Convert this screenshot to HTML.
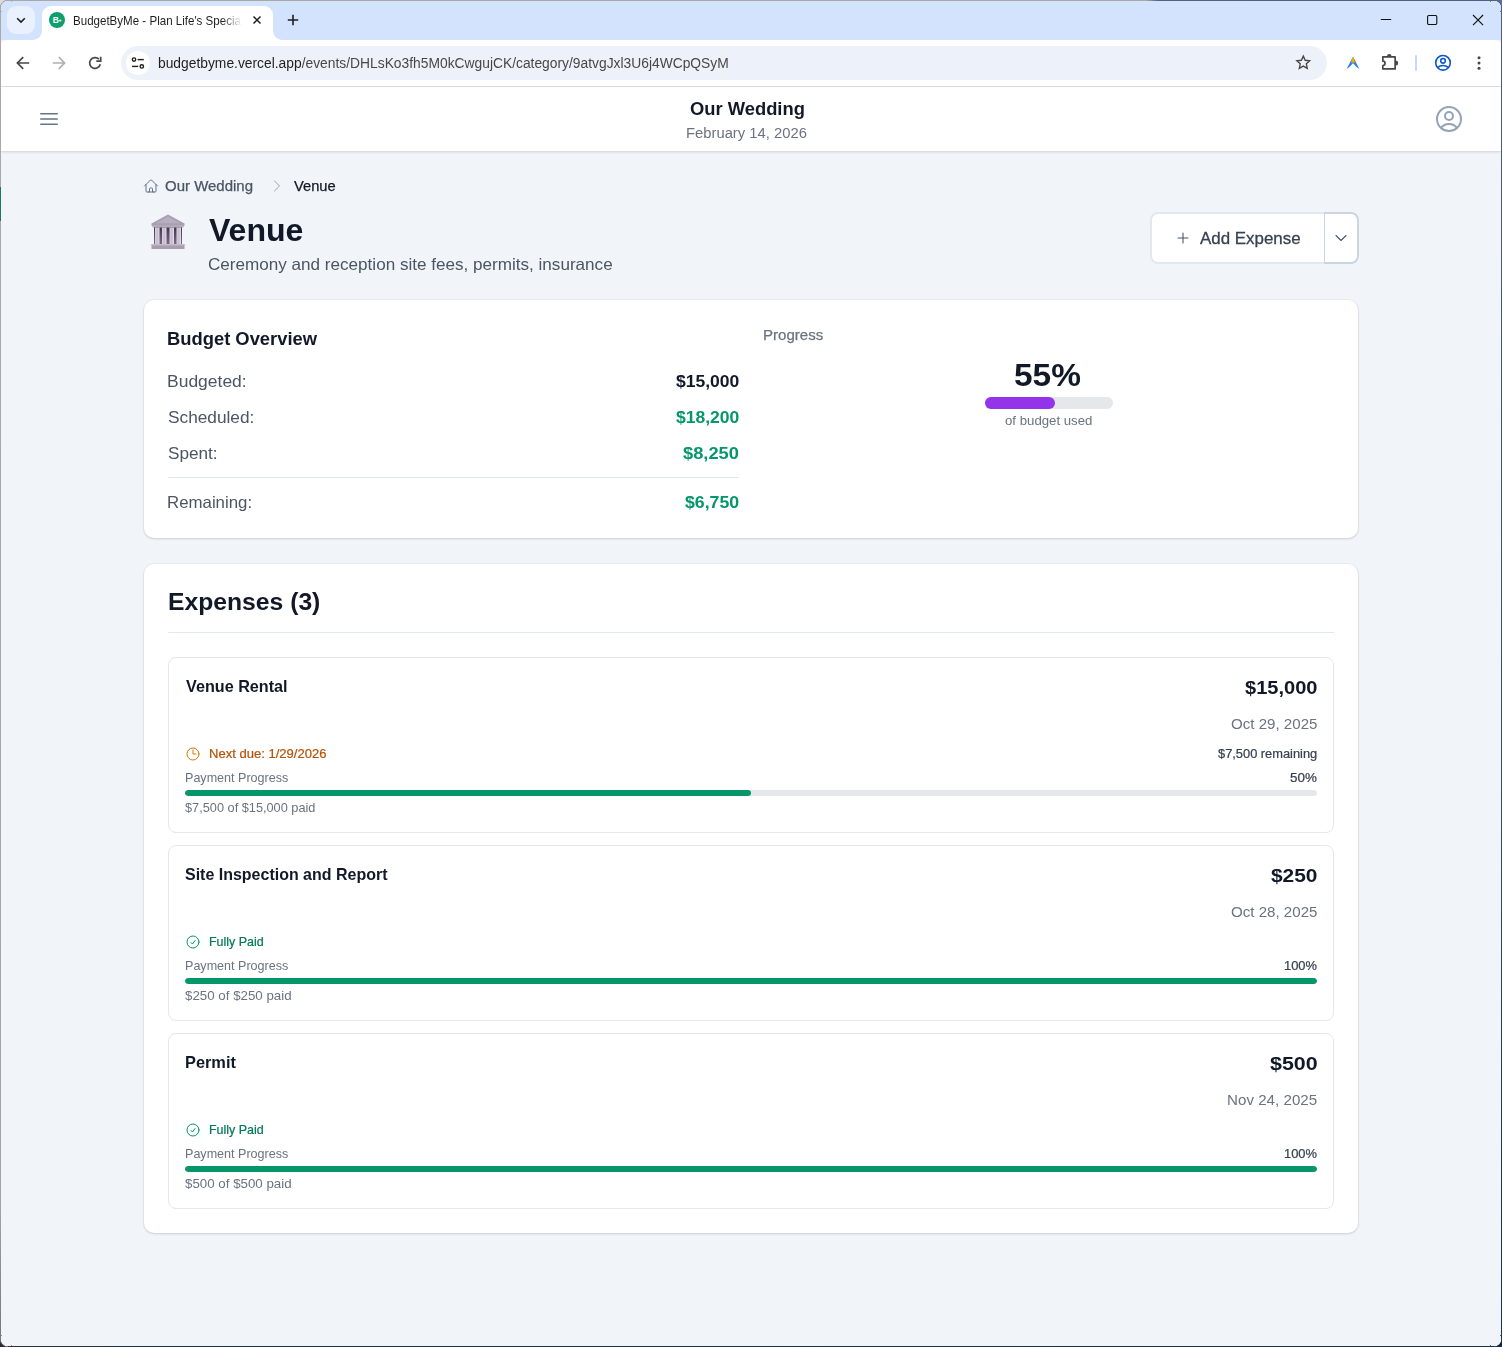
<!DOCTYPE html>
<html lang="en">
<head>
<meta charset="utf-8">
<title>BudgetByMe - Plan Life's Special Events</title>
<style>
*{box-sizing:border-box;margin:0;padding:0}
html,body{width:1502px;height:1347px;overflow:hidden;background:#f1f5f9;font-family:"Liberation Sans",sans-serif;}
#win{position:absolute;left:0;top:0;width:1502px;height:1347px;background:#f1f5f9;overflow:hidden;}
#frame{position:absolute;left:0;top:0;width:1502px;height:1347px;pointer-events:none;z-index:50}
#frame i{position:absolute;display:block}
.abs{position:absolute}
/* chrome */
#tabstrip{position:absolute;left:0;top:0;width:1502px;height:40px;background:#d3e3fd}
#tabsearch{position:absolute;left:7px;top:6px;width:28px;height:28px;border-radius:9px;background:#e9f1fe}
#tab{position:absolute;left:42px;top:6px;width:231px;height:34px;background:#fff;border-radius:9px 9px 0 0}
#tab:before,#tab:after{content:"";position:absolute;bottom:0;width:9px;height:9px;background:radial-gradient(circle at 0 0,rgba(255,255,255,0) 8.5px,#fff 9px)}
#tab:before{left:-9px}
#tab:after{right:-9px;background:radial-gradient(circle at 100% 0,rgba(255,255,255,0) 8.5px,#fff 9px)}
#tabtitle{position:absolute;left:31px;top:7px;width:170px;height:16px;font-size:12px;line-height:16px;color:#1f1f1f;white-space:nowrap;overflow:hidden;letter-spacing:0.1px;-webkit-mask-image:linear-gradient(90deg,#000 148px,transparent 168px);mask-image:linear-gradient(90deg,#000 148px,transparent 168px)}
#toolbar{position:absolute;left:0;top:40px;width:1502px;height:47px;background:#fff;border-bottom:1px solid #dcdfe3;border-radius:8px 8px 0 0}
#omni{position:absolute;left:121px;top:6px;width:1206px;height:34px;border-radius:17px;background:#edf2fa}
#siteinfo{position:absolute;left:5px;top:5px;width:24px;height:24px;border-radius:12px;background:#fff}
#url{position:absolute;left:36px;top:8px;font-size:14px;line-height:18px;color:#1f1f1f;white-space:nowrap;letter-spacing:0.02px}
#url span{color:#474747}
/* page */
#page{position:absolute;left:1px;top:87px;width:1500px;height:1259px;background:#f1f5f9;color:#0f172a}
#hdr{position:absolute;left:0;top:0;width:1500px;height:64px;background:#fff;box-shadow:0 1px 3px rgba(15,23,42,.1),0 1px 2px rgba(15,23,42,.06)}
.t{position:absolute;white-space:nowrap;line-height:1;transform-origin:0 0}
.card{position:absolute;background:#fff;border-radius:10px;box-shadow:0 0 0 1px rgba(15,23,42,.03),0 1px 3px rgba(15,23,42,.09),0 1px 2px rgba(15,23,42,.05)}
.item{position:absolute;left:24px;width:1166px;height:176px;border:1px solid #e5e7eb;border-radius:8px;background:#fff}
.bar{position:absolute;left:16px;top:132px;width:1132px;height:6px;border-radius:3px;background:#e5e7eb;overflow:hidden}
.bar i{display:block;height:6px;border-radius:3px;background:#059669}
.g{color:#64748b}
.gr{color:#059669}
</style>
</head>
<body>
<div id="win">
 <div id="tabstrip">
  <div id="tabsearch"><svg class="abs" style="left:8px;top:9px" width="12" height="10" viewBox="0 0 12 10" fill="none" stroke="#1f1f1f" stroke-width="1.600"><path d="M2.200 3.200l3.800 3.800 3.800-3.800"/></svg></div>
  <div id="tab">
   <div class="abs" style="left:7px;top:6px;width:16px;height:16px;border-radius:8px;background:#0e9f6e;color:#fff;font-size:8.500px;font-weight:700;line-height:16px;text-align:center;letter-spacing:-.4px">B<span style="font-size:5.500px;vertical-align:1px">+</span></div>
      <svg class="abs" style="left:209px;top:8px" width="12" height="12" viewBox="0 0 12 12" fill="none" stroke="#1f1f1f" stroke-width="1.5"><path d="M2.500 2.500l7 7M9.500 2.500l-7 7"/></svg>
  </div>
  <svg class="abs" style="left:286px;top:13px" width="14" height="14" viewBox="0 0 14 14" fill="none" stroke="#1f1f1f" stroke-width="1.6"><path d="M7 1.800v10.400M1.800 7h10.400"/></svg>
  <!-- window controls -->
  <svg class="abs" style="left:1380px;top:13px" width="12" height="12" viewBox="0 0 12 12" fill="none" stroke="#111" stroke-width="1"><path d="M0.800 6.500h10.400"/></svg>
  <svg class="abs" style="left:1426px;top:14px" width="12" height="12" viewBox="0 0 12 12" fill="none" stroke="#111" stroke-width="1.100"><rect x="1.600" y="1.500" width="9.200" height="9" rx="1.200"/></svg>
  <svg class="abs" style="left:1472px;top:14px" width="12" height="12" viewBox="0 0 12 12" fill="none" stroke="#111" stroke-width="1.100"><path d="M1 1l10.100 10.100M11.100 1L1 11.100"/></svg>
 </div>
 <div id="toolbar">
  <svg class="abs" style="left:13px;top:13px" width="20" height="20" viewBox="0 0 20 20" fill="none" stroke="#474747" stroke-width="1.700"><path d="M16.200 10H4.800M10.200 4.200L4.400 10l5.800 5.800"/></svg>
  <svg class="abs" style="left:49px;top:13px" width="20" height="20" viewBox="0 0 20 20" fill="none" stroke="#b0b0b0" stroke-width="1.700"><path d="M3.800 10h11.400M9.800 4.200l5.800 5.800-5.800 5.800"/></svg>
  <svg class="abs" style="left:85px;top:13px" width="20" height="20" viewBox="0 0 20 20" fill="none" stroke="#474747" stroke-width="1.700"><path d="M15.300 11.300A5.400 5.400 0 1 1 13.900 6.200"/><path d="M15.700 3.800v4.400h-4.400"/></svg>
  <div id="omni"><div id="siteinfo"><svg class="abs" style="left:4px;top:4px" width="16" height="16" viewBox="0 0 16 16" fill="none" stroke="#1f1f1f" stroke-width="1.400"><circle cx="4" cy="4.600" r="1.700"/><path d="M7.600 4.600h6.200"/><circle cx="11.800" cy="11.400" r="1.700"/><path d="M2 11.400h6.200"/></svg></div>
   <svg class="abs" style="left:1173.600px;top:8.400px" width="16.600" height="16.600" viewBox="0 0 18 18" fill="none" stroke="#474747" stroke-width="1.500" stroke-linejoin="miter"><path d="M9 2.300l2.060 4.500 4.900.53-3.650 3.330 1 4.840L9 13.050 4.690 15.500l1-4.840L2.040 7.330l4.900-.53z"/></svg>
  </div>
  <!-- extension A icon -->
  <svg class="abs" style="left:1345px;top:15px" width="16" height="16" viewBox="0 0 16 16"><defs><linearGradient id="rb" x1="0" y1="0" x2="1" y2="0"><stop offset="0" stop-color="#34a853"/><stop offset=".5" stop-color="#fbbc05"/><stop offset="1" stop-color="#ea4335"/></linearGradient><clipPath id="ac"><path d="M8 1.800L14.400 14.100 11.500 11.900 8 8.200 4.500 11.900 1.600 14.100z"/></clipPath></defs><path d="M8 1.800L14.400 14.100 11.500 11.900 8 8.200 4.500 11.900 1.600 14.100z" fill="#2f7df6"/><rect x="5.200" y="0" width="5.600" height="7.600" fill="url(#rb)" clip-path="url(#ac)"/></svg>
  <!-- puzzle -->
  <svg class="abs" style="left:1379px;top:13px" width="20" height="20" viewBox="0 0 20 20"><path d="M3.850 3.850H16.150V15.950H3.850V12.500A2.200 2.200 0 0 0 3.850 8.100Z" fill="none" stroke="#474747" stroke-width="1.700" stroke-linejoin="round"/><path d="M8 3.200A2.250 2.200 0 0 1 12.500 3.200Z" fill="#474747"/><path d="M16.900 7.500A2.300 2.500 0 0 1 16.900 12.500Z" fill="#474747"/></svg>
  <div class="abs" style="left:1415px;top:15px;width:2px;height:16px;background:#c7d8f7;border-radius:1px"></div>
  <!-- profile -->
  <svg class="abs" style="left:1433px;top:13px" width="20" height="20" viewBox="0 0 20 20" fill="none" stroke="#0b57d0" stroke-width="1.600"><circle cx="10" cy="9.800" r="7.300"/><circle cx="10" cy="7.800" r="2.300"/><path d="M4.600 14.600c1.500-1.400 3.300-2.100 5.400-2.100s3.900.7 5.400 2.100"/></svg>
  <svg class="abs" style="left:1469px;top:13px" width="20" height="20" viewBox="0 0 20 20" fill="#474747"><circle cx="10" cy="4.800" r="1.500"/><circle cx="10" cy="10" r="1.500"/><circle cx="10" cy="15.200" r="1.500"/></svg>
 </div>
 <div id="page">
  <div id="hdr">
   <svg class="abs" style="left:36px;top:20px" width="24" height="24" viewBox="0 0 24 24" fill="none" stroke="#64748b" stroke-width="1.5" stroke-linecap="round"><path d="M3.75 6.75h16.5M3.75 12h16.5M3.75 17.25h16.5"/></svg>
   <svg class="abs" style="left:1432px;top:16px" width="32" height="32" viewBox="0 0 24 24" fill="none" stroke="#94a3b8" stroke-width="1.5" stroke-linecap="round" stroke-linejoin="round"><path d="M17.982 18.725A7.488 7.488 0 0012 15.75a7.488 7.488 0 00-5.982 2.975m11.963 0a9 9 0 10-11.963 0m11.963 0A8.966 8.966 0 0112 21a8.966 8.966 0 01-5.982-2.275M15 9.75a3 3 0 11-6 0 3 3 0 016 0z"/></svg>
  </div>
  <!-- breadcrumb icons -->
  <svg class="abs" style="left:142px;top:91px" width="16" height="16" viewBox="0 0 24 24" fill="none" stroke="#64748b" stroke-width="1.5" stroke-linecap="round" stroke-linejoin="round"><path d="M2.25 12l8.954-8.955c.44-.439 1.152-.439 1.591 0L21.75 12M4.5 9.75v10.125c0 .621.504 1.125 1.125 1.125H9.75v-4.875c0-.621.504-1.125 1.125-1.125h2.25c.621 0 1.125.504 1.125 1.125V21h4.125c.621 0 1.125-.504 1.125-1.125V9.75M8.250 21h8.250"/></svg>
  <svg class="abs" style="left:268px;top:91px" width="16" height="16" viewBox="0 0 24 24" fill="none" stroke="#94a3b8" stroke-width="1.5" stroke-linecap="round" stroke-linejoin="round"><path d="M8.25 4.5l7.5 7.5-7.5 7.5"/></svg>
  <!-- venue emoji -->
  <svg class="abs" style="left:148px;top:126px" width="38" height="38" viewBox="0 0 38 38">
   <defs><linearGradient id="col" x1="0" x2="1"><stop offset="0" stop-color="#d9d3de"/><stop offset=".5" stop-color="#c3bccb"/><stop offset="1" stop-color="#e4dfe8"/></linearGradient>
   <linearGradient id="dk" x1="0" y1="0" x2="0" y2="1"><stop offset="0" stop-color="#3f3050"/><stop offset="1" stop-color="#7d6c8d"/></linearGradient></defs>
   <rect x="5" y="13" width="28" height="19" fill="url(#dk)"/>
   <path d="M19 1.5L35.5 10.5v2.5H2.500v-2.5z" fill="#a99fb2"/>
   <path d="M19 3.500L31 10.200H7z" fill="#b7aebf"/>
   <rect x="3.500" y="12" width="31" height="2.500" fill="#b3aabb"/>
   <rect x="6" y="14.500" width="4.500" height="17" fill="url(#col)"/>
   <rect x="13" y="14.500" width="4.500" height="17" fill="url(#col)"/>
   <rect x="20.500" y="14.500" width="4.500" height="17" fill="url(#col)"/>
   <rect x="27.500" y="14.500" width="4.500" height="17" fill="url(#col)"/>
   <rect x="2.500" y="31" width="33" height="5" fill="#a79dae"/>
   <rect x="2.500" y="31" width="33" height="1.500" fill="#c2bac9"/>
  </svg>
  <!-- add expense -->
  <div class="abs" style="left:1149px;top:125px;width:176px;height:52px;background:#fff;border:2px solid #e2e8f0;border-right:0;border-radius:8px 0 0 8px"></div>
  <div class="abs" style="left:1323px;top:125px;width:35px;height:52px;background:#fff;border:2px solid #cbd5e1;border-left-width:1px;border-radius:0 8px 8px 0"></div>
  <svg class="abs" style="left:1174px;top:143px" width="16" height="16" viewBox="0 0 24 24" fill="none" stroke="#475569" stroke-width="1.6" stroke-linecap="round"><path d="M12 4.500v15m7.500-7.500h-15"/></svg>
  <svg class="abs" style="left:1332px;top:143px" width="16" height="16" viewBox="0 0 24 24" fill="none" stroke="#475569" stroke-width="1.6" stroke-linecap="round" stroke-linejoin="round"><path d="M19.500 8.250l-7.500 7.500-7.500-7.500"/></svg>
  <!-- budget card -->
  <div class="card" style="left:143px;top:213px;width:1214px;height:238px">
   <div class="abs" style="left:24px;top:177px;width:571px;height:1px;background:#e2e8f0"></div>
   <div class="abs" style="left:841px;top:97px;width:128px;height:12px;border-radius:6px;background:#e5e7eb"><div style="width:70px;height:12px;border-radius:6px;background:#9333ea"></div></div>
  </div>
  <!-- expenses card -->
  <div class="card" style="left:143px;top:477px;width:1214px;height:669px">
   <div class="abs" style="left:24px;top:68px;width:1166px;height:1px;background:#e2e8f0"></div>
   <div class="item" style="top:93px"><div class="bar"><i style="width:566px"></i></div></div>
   <div class="item" style="top:281px"><div class="bar"><i style="width:1132px"></i></div></div>
   <div class="item" style="top:469px"><div class="bar"><i style="width:1132px"></i></div></div>
  </div>
  <!-- status icons -->
  <svg class="abs" style="left:184px;top:659px" width="16" height="16" viewBox="0 0 24 24" fill="none" stroke="#d97706" stroke-width="1.5" stroke-linecap="round" stroke-linejoin="round"><path d="M12 6v6h4.500m4.500 0a9 9 0 11-18 0 9 9 0 0118 0z"/></svg>
  <svg class="abs" style="left:184px;top:847px" width="16" height="16" viewBox="0 0 24 24" fill="none" stroke="#059669" stroke-width="1.5" stroke-linecap="round" stroke-linejoin="round"><path d="M9 12.750L11.250 15 15 9.750M21 12a9 9 0 11-18 0 9 9 0 0118 0z"/></svg>
  <svg class="abs" style="left:184px;top:1035px" width="16" height="16" viewBox="0 0 24 24" fill="none" stroke="#059669" stroke-width="1.5" stroke-linecap="round" stroke-linejoin="round"><path d="M9 12.750L11.250 15 15 9.750M21 12a9 9 0 11-18 0 9 9 0 0118 0z"/></svg>
<div class="t" style="left:688.69px;top:13.31px;font-size:18.54px;font-weight:700;color:#111827;transform:scaleX(0.9906);">Our Wedding</div>
<div class="t" style="left:685.21px;top:38.79px;font-size:14.42px;font-weight:400;color:#6b7280;transform:scaleX(1.0267);">February 14, 2026</div>
<div class="t" style="left:164.13px;top:91.79px;font-size:14.42px;font-weight:400;color:#4b5563;transform:scaleX(1.0400);-webkit-text-stroke:0.25px;">Our Wedding</div>
<div class="t" style="left:292.55px;top:91.79px;font-size:14.42px;font-weight:400;color:#111827;transform:scaleX(1.0182);-webkit-text-stroke:0.25px;">Venue</div>
<div class="t" style="left:207.81px;top:128.84px;font-size:30.90px;font-weight:700;color:#111827;transform:scaleX(1.0376);">Venue</div>
<div class="t" style="left:207.36px;top:169.05px;font-size:16.48px;font-weight:400;color:#4b5563;transform:scaleX(1.0377);">Ceremony and reception site fees, permits, insurance</div>
<div class="t" style="left:1199.28px;top:143.05px;font-size:16.48px;font-weight:400;color:#374151;transform:scaleX(1.0265);-webkit-text-stroke:0.29px;">Add Expense</div>
<div class="t" style="left:166.21px;top:243.31px;font-size:18.54px;font-weight:700;color:#111827;transform:scaleX(0.9913);">Budget Overview</div>
<div class="t" style="left:166.44px;top:286.05px;font-size:16.48px;font-weight:400;color:#4b5563;transform:scaleX(1.0614);">Budgeted:</div>
<div class="t" style="left:166.95px;top:322.05px;font-size:16.48px;font-weight:400;color:#4b5563;transform:scaleX(1.0480);">Scheduled:</div>
<div class="t" style="left:166.95px;top:358.05px;font-size:16.48px;font-weight:400;color:#4b5563;transform:scaleX(1.0419);">Spent:</div>
<div class="t" style="left:166.44px;top:407.05px;font-size:16.48px;font-weight:400;color:#4b5563;transform:scaleX(1.0216);">Remaining:</div>
<div class="t" style="left:674.76px;top:286.05px;font-size:16.48px;font-weight:700;color:#111827;transform:scaleX(1.0633);">$15,000</div>
<div class="t" style="left:674.73px;top:322.05px;font-size:16.48px;font-weight:700;color:#059669;transform:scaleX(1.0632);">$18,200</div>
<div class="t" style="left:682.30px;top:358.05px;font-size:16.48px;font-weight:700;color:#059669;transform:scaleX(1.1085);">$8,250</div>
<div class="t" style="left:683.73px;top:407.05px;font-size:16.48px;font-weight:700;color:#059669;transform:scaleX(1.0747);">$6,750</div>
<div class="t" style="left:761.79px;top:240.79px;font-size:14.42px;font-weight:400;color:#6b7280;transform:scaleX(1.0462);-webkit-text-stroke:0.25px;">Progress</div>
<div class="t" style="left:1012.94px;top:273.84px;font-size:30.90px;font-weight:700;color:#111827;transform:scaleX(1.0833);">55%</div>
<div class="t" style="left:1004.07px;top:327.54px;font-size:12.36px;font-weight:400;color:#6b7280;transform:scaleX(1.0689);">of budget used</div>
<div class="t" style="left:166.81px;top:503.07px;font-size:24.72px;font-weight:700;color:#111827;transform:scaleX(0.9989);">Expenses (3)</div>
<div class="t" style="left:184.74px;top:591.05px;font-size:16.48px;font-weight:700;color:#111827;transform:scaleX(0.9822);">Venue Rental</div>
<div class="t" style="left:1243.95px;top:592.31px;font-size:18.54px;font-weight:700;color:#111827;transform:scaleX(1.0819);">$15,000</div>
<div class="t" style="left:1229.61px;top:629.79px;font-size:14.42px;font-weight:400;color:#6b7280;transform:scaleX(1.0478);">Oct 29, 2025</div>
<div class="t" style="left:183.55px;top:684.54px;font-size:12.36px;font-weight:400;color:#6b7280;transform:scaleX(1.0162);">Payment Progress</div>
<div class="t" style="left:1288.62px;top:684.54px;font-size:12.36px;font-weight:400;color:#374151;transform:scaleX(1.0845);-webkit-text-stroke:0.22px;">50%</div>
<div class="t" style="left:184.15px;top:714.54px;font-size:12.36px;font-weight:400;color:#6b7280;transform:scaleX(1.0316);">$7,500 of $15,000 paid</div>
<div class="t" style="left:184.46px;top:779.05px;font-size:16.48px;font-weight:700;color:#111827;transform:scaleX(0.9704);">Site Inspection and Report</div>
<div class="t" style="left:1269.55px;top:780.31px;font-size:18.54px;font-weight:700;color:#111827;transform:scaleX(1.1277);">$250</div>
<div class="t" style="left:1229.61px;top:817.79px;font-size:14.42px;font-weight:400;color:#6b7280;transform:scaleX(1.0478);">Oct 28, 2025</div>
<div class="t" style="left:183.55px;top:872.54px;font-size:12.36px;font-weight:400;color:#6b7280;transform:scaleX(1.0162);">Payment Progress</div>
<div class="t" style="left:1282.94px;top:872.54px;font-size:12.36px;font-weight:400;color:#374151;transform:scaleX(1.0422);-webkit-text-stroke:0.22px;">100%</div>
<div class="t" style="left:184.15px;top:902.54px;font-size:12.36px;font-weight:400;color:#6b7280;transform:scaleX(1.0776);">$250 of $250 paid</div>
<div class="t" style="left:183.85px;top:967.05px;font-size:16.48px;font-weight:700;color:#111827;transform:scaleX(0.9931);">Permit</div>
<div class="t" style="left:1268.73px;top:968.31px;font-size:18.54px;font-weight:700;color:#111827;transform:scaleX(1.1545);">$500</div>
<div class="t" style="left:1225.81px;top:1005.79px;font-size:14.42px;font-weight:400;color:#6b7280;transform:scaleX(1.0522);">Nov 24, 2025</div>
<div class="t" style="left:183.55px;top:1060.54px;font-size:12.36px;font-weight:400;color:#6b7280;transform:scaleX(1.0162);">Payment Progress</div>
<div class="t" style="left:1282.94px;top:1060.54px;font-size:12.36px;font-weight:400;color:#374151;transform:scaleX(1.0422);-webkit-text-stroke:0.22px;">100%</div>
<div class="t" style="left:184.15px;top:1090.54px;font-size:12.36px;font-weight:400;color:#6b7280;transform:scaleX(1.0776);">$500 of $500 paid</div>
<div class="t" style="left:208.43px;top:660.54px;font-size:12.36px;font-weight:400;color:#b45309;transform:scaleX(1.0544);-webkit-text-stroke:0.22px;">Next due: 1/29/2026</div>
<div class="t" style="left:1216.66px;top:660.54px;font-size:12.36px;font-weight:400;color:#374151;transform:scaleX(1.0389);-webkit-text-stroke:0.22px;">$7,500 remaining</div>
<div class="t" style="left:208.15px;top:848.54px;font-size:12.36px;font-weight:400;color:#047857;transform:scaleX(1.0088);-webkit-text-stroke:0.22px;">Fully Paid</div>
<div class="t" style="left:208.15px;top:1036.54px;font-size:12.36px;font-weight:400;color:#047857;transform:scaleX(1.0088);-webkit-text-stroke:0.22px;">Fully Paid</div>
<div class="t" style="left:156.99px;top:-30.86px;font-size:14.01px;font-weight:400;color:#1f1f1f;transform:scaleX(0.9872);">budgetbyme.vercel.app<span style="color:#474747">/events/DHLsKo3fh5M0kCwgujCK/category/9atvgJxl3U6j4WCpQSyM</span></div>
<div class="t" style="left:71.54px;top:-72.20px;font-size:12.05px;font-weight:400;color:#1f1f1f;width:171px;height:15.7px;line-height:1;overflow:hidden;-webkit-mask-image:linear-gradient(90deg,#000 149px,transparent 169px);mask-image:linear-gradient(90deg,#000 149px,transparent 169px)"><div style="transform:scaleX(0.9592);transform-origin:0 0;white-space:nowrap">BudgetByMe - Plan Life&#x27;s Special Events</div></div>
 </div>
</div>
<div id="frame">
 <i style="left:0;top:0;width:12px;height:12px;background:radial-gradient(circle at 8px 8px,rgba(0,0,0,0) 7px,#a9a8a5 7.500px,#a9a8a5 8px,#dcdcdc 8.500px)"></i>
 <i style="left:1490px;top:0;width:12px;height:12px;background:radial-gradient(circle at 4px 8px,rgba(0,0,0,0) 7px,#52607a 7.500px,#52607a 8px,#55709f 8.500px)"></i>
 <i style="left:0;top:1335px;width:12px;height:12px;background:radial-gradient(circle at 8px 4px,rgba(0,0,0,0) 7px,#77777a 7.500px,#55555a 8px,#2a2c33 8.500px)"></i>
 <i style="left:1490px;top:1335px;width:12px;height:12px;background:radial-gradient(circle at 4px 4px,rgba(0,0,0,0) 7px,#2a4464 7.500px,#1d3555 8px,#0f2a4a 8.500px)"></i>
 <i style="left:8px;top:0;width:1486px;height:1px;background:linear-gradient(90deg,#a9a8a5 0,#a9a8a5 1138px,#556079 1150px,#525f79 100%)"></i>
 <i style="left:0;top:8px;width:1px;height:1331px;background:linear-gradient(180deg,#a9a9a7 0,#a9a9a7 179px,#1b7a5c 179px,#1b7a5c 213px,#a9a9a7 213px,#a4a4a4 1200px,#77777a 100%)"></i>
 <i style="left:1501px;top:8px;width:1px;height:1331px;background:linear-gradient(180deg,#4d5f80,#3a5070 50%,#18304c)"></i>
 <i style="left:8px;top:1346px;width:1486px;height:1px;background:linear-gradient(90deg,#2e3038 0,#2e3038 95px,#1c3344 110px,#1a3048 100%)"></i>
</div>
</body>
</html>
